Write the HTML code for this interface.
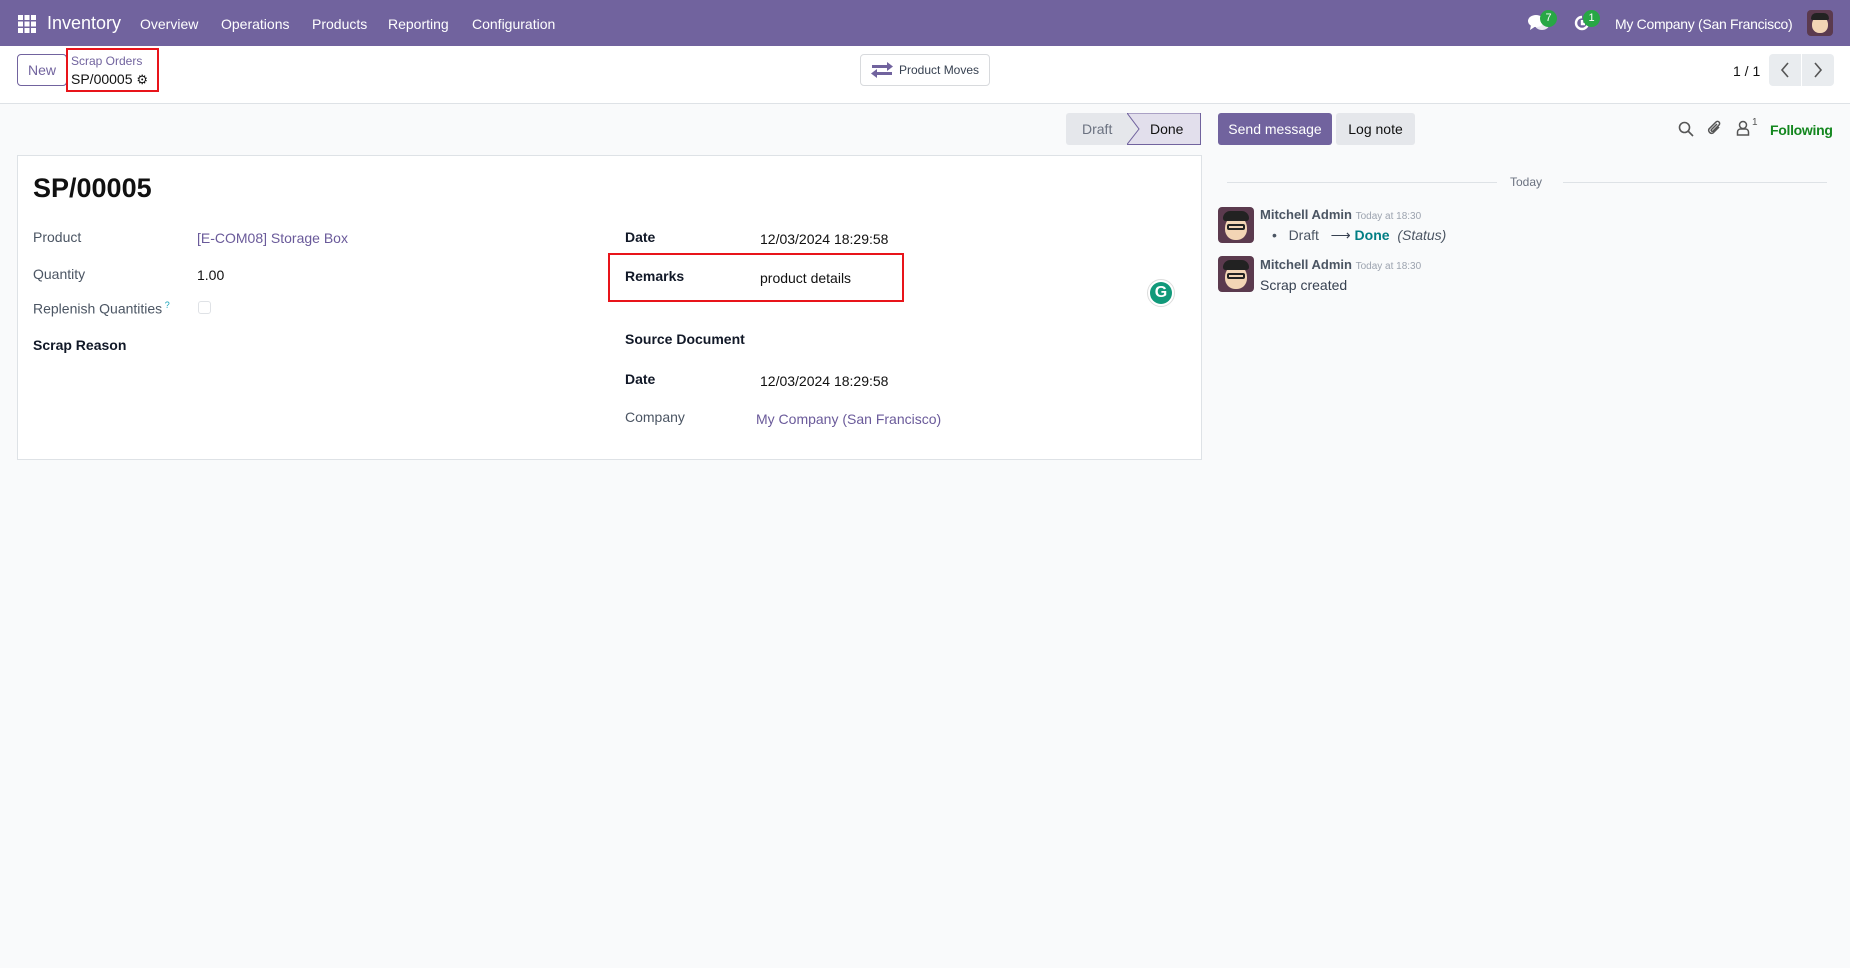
<!DOCTYPE html>
<html><head><meta charset="utf-8">
<style>
*{box-sizing:border-box;margin:0;padding:0}
body{width:1850px;height:968px;overflow:hidden;background:#f9fafb;font-family:"Liberation Sans",sans-serif;color:#374151;font-size:14px;position:relative;white-space:nowrap}
.a{position:absolute;white-space:nowrap}
.nav{position:absolute;left:0;top:0;width:1850px;height:46px;background:#71639e;color:#fff}
.cp{position:absolute;left:0;top:46px;width:1850px;height:58px;background:#fff;border-bottom:1px solid #dee2e6}
.btn{position:absolute;border:1px solid #d8dadd;border-radius:4px;background:#fff;white-space:nowrap}
.lbl{color:#4b5563}
.b{font-weight:bold;color:#111827}
.link{color:#6a5a9a}
</style></head><body>
<div class="nav">
 <svg class="a" style="left:18px;top:15px" width="18" height="18" viewBox="0 0 18 18" fill="#fff">
  <rect x="0" y="0" width="5" height="5"/><rect x="6.5" y="0" width="5" height="5"/><rect x="13" y="0" width="5" height="5"/>
  <rect x="0" y="6.5" width="5" height="5"/><rect x="6.5" y="6.5" width="5" height="5"/><rect x="13" y="6.5" width="5" height="5"/>
  <rect x="0" y="13" width="5" height="5"/><rect x="6.5" y="13" width="5" height="5"/><rect x="13" y="13" width="5" height="5"/>
 </svg>
 <div class="a" style="left:47px;top:13px;font-size:18px">Inventory</div>
 <div class="a" style="left:140px;top:16px;font-size:14px">Overview</div>
 <div class="a" style="left:221px;top:16px;font-size:14px">Operations</div>
 <div class="a" style="left:312px;top:16px;font-size:14px">Products</div>
 <div class="a" style="left:388px;top:16px;font-size:14px">Reporting</div>
 <div class="a" style="left:472px;top:16px;font-size:14px">Configuration</div>
 <svg class="a" style="left:1528px;top:14px" width="22" height="18" viewBox="0 0 22 18" fill="#fff"><ellipse cx="8" cy="7" rx="8" ry="6"/><path d="M3 11 L2 16 L8 12Z"/><ellipse cx="14" cy="11" rx="7" ry="5" opacity=".85"/></svg>
 <div class="a" style="left:1540px;top:10px;width:17px;height:17px;border-radius:50%;background:#28a745;font-size:11px;text-align:center;line-height:17px">7</div>
 <svg class="a" style="left:1573px;top:14px" width="18" height="18" viewBox="0 0 18 18" fill="none" stroke="#fff" stroke-width="2.4"><path d="M15 9A6 6 0 1 1 9 3"/><path d="M9 6v4h3"/></svg>
 <div class="a" style="left:1583px;top:10px;width:17px;height:17px;border-radius:50%;background:#28a745;font-size:11px;text-align:center;line-height:17px">1</div>
 <div class="a" style="left:1615px;top:16px;font-size:14px;letter-spacing:-0.3px">My Company (San Francisco)</div>
 <div class="a" style="left:1807px;top:10px;width:26px;height:26px;border-radius:4px;background:#5b3a4e;overflow:hidden"><div style="position:absolute;left:5px;top:6px;width:16px;height:17px;border-radius:50% 50% 45% 45%;background:#f3d5b5"></div><div style="position:absolute;left:4px;top:3px;width:18px;height:7px;border-radius:6px 6px 2px 2px;background:#222"></div></div>
</div>
<div class="cp">
 <div class="btn" style="left:17px;top:8px;width:50px;height:32px;border-color:#71639e;color:#71639e;font-size:14px;text-align:center;line-height:30px">New</div>
 <div class="a" style="left:66px;top:2px;width:93px;height:44px;border:2px solid #e8141a"></div>
 <div class="a" style="left:71px;top:8px;font-size:12px;color:#71639e">Scrap Orders</div>
 <div class="a" style="left:71px;top:25px;font-size:14px;color:#111">SP/00005 <span style="font-size:13px">⚙</span></div>
 <div class="btn" style="left:860px;top:8px;width:130px;height:32px;font-size:12px;line-height:30px;padding-left:38px;color:#374151">Product Moves</div>
 <svg class="a" style="left:871px;top:16px" width="22" height="16" viewBox="0 0 22 16" fill="#71639e"><rect x="1" y="3" width="17" height="3"/><path d="M16 0 L22 4.5 L16 9Z"/><rect x="4" y="10" width="17" height="3"/><path d="M6 7 L0 11.5 L6 16Z"/></svg>
 <div class="a" style="left:1733px;top:17px;font-size:14px;color:#111">1 / 1</div>
 <div class="a" style="left:1769px;top:8px;width:32px;height:32px;background:#e9ecef;border-radius:4px 0 0 4px"></div>
 <div class="a" style="left:1802px;top:8px;width:32px;height:32px;background:#e9ecef;border-radius:0 4px 4px 0"></div>
 <svg class="a" style="left:1779px;top:16px" width="12" height="16" viewBox="0 0 12 16" fill="none" stroke="#555" stroke-width="1.6"><path d="M9 1 L3 8 L9 15"/></svg>
 <svg class="a" style="left:1812px;top:16px" width="12" height="16" viewBox="0 0 12 16" fill="none" stroke="#555" stroke-width="1.6"><path d="M3 1 L9 8 L3 15"/></svg>
</div>
<div class="a" style="left:1066px;top:113px;width:135px;height:32px;background:#e5e7eb;border-radius:3px"></div>
<svg class="a" style="left:1127px;top:113px" width="75" height="32" viewBox="0 0 75 32"><path d="M0 0 H73.5 V31.5 H0 L12 16Z" fill="#e2dfec" stroke="#71639e" stroke-width="1"/></svg>
<div class="a" style="left:1082px;top:121px;font-size:14px;color:#6b7280">Draft</div>
<div class="a" style="left:1150px;top:121px;font-size:14px;color:#111">Done</div>
<div class="a" style="left:17px;top:155px;width:1185px;height:305px;background:#fff;border:1px solid #dee2e6"></div>
<div class="a" style="left:33px;top:173px;font-size:27px;font-weight:bold;color:#111">SP/00005</div>
<div class="a lbl" style="left:33px;top:229px">Product</div>
<div class="a link" style="left:197px;top:230px">[E-COM08] Storage Box</div>
<div class="a lbl" style="left:33px;top:266px">Quantity</div>
<div class="a" style="left:197px;top:267px;color:#111">1.00</div>
<div class="a lbl" style="left:33px;top:300px">Replenish Quantities<sup style="color:#17a2b8;font-size:9px"> ?</sup></div>
<div class="a" style="left:198px;top:301px;width:13px;height:13px;border:1px solid #dfe2e6;border-radius:3px"></div>
<div class="a b" style="left:33px;top:337px">Scrap Reason</div>
<div class="a b" style="left:625px;top:229px">Date</div>
<div class="a" style="left:760px;top:231px;color:#111">12/03/2024 18:29:58</div>
<div class="a" style="left:608px;top:253px;width:296px;height:49px;border:2px solid #e8141a"></div>
<div class="a b" style="left:625px;top:268px">Remarks</div>
<div class="a" style="left:760px;top:270px;color:#111">product details</div>
<div class="a b" style="left:625px;top:331px">Source Document</div>
<div class="a b" style="left:625px;top:371px">Date</div>
<div class="a" style="left:760px;top:373px;color:#111">12/03/2024 18:29:58</div>
<div class="a lbl" style="left:625px;top:409px">Company</div>
<div class="a link" style="left:756px;top:411px">My Company (San Francisco)</div>
<div class="a" style="left:1147px;top:279px;width:28px;height:28px;border-radius:50%;background:#fff;border:1px solid #ddd"></div>
<div class="a" style="left:1150px;top:282px;width:22px;height:22px;border-radius:50%;background:#11997a;color:#fff;font-weight:bold;font-size:16px;text-align:center;line-height:22px">G</div>
<div class="a" style="left:1218px;top:113px;width:114px;height:32px;background:#71639e;border-radius:3px;color:#fff;font-size:14px;text-align:center;line-height:32px">Send message</div>
<div class="a" style="left:1336px;top:113px;width:79px;height:32px;background:#e5e7eb;border-radius:3px;color:#111;font-size:14px;text-align:center;line-height:32px">Log note</div>
<svg class="a" style="left:1678px;top:121px" width="16" height="16" viewBox="0 0 16 16" fill="none" stroke="#555" stroke-width="1.6"><circle cx="6.5" cy="6.5" r="5"/><path d="M10 10 L15 15"/></svg>
<svg class="a" style="left:1707px;top:119px" width="16" height="18" viewBox="0 0 16 18" fill="none" stroke="#555" stroke-width="1.5"><path d="M12 8 L6 14 A3 3 0 0 1 2 10 L9 3 A2 2 0 0 1 12 6 L6 12 A1 1 0 0 1 4.5 10.5 L10 5"/></svg>
<svg class="a" style="left:1736px;top:120px" width="14" height="16" viewBox="0 0 14 16" fill="none" stroke="#555" stroke-width="1.5"><circle cx="7" cy="5" r="3.5"/><path d="M1.5 15 V12 A3 3 0 0 1 4.5 9 H9.5 A3 3 0 0 1 12.5 12 V15Z"/></svg>
<div class="a" style="left:1752px;top:117px;font-size:10px;color:#555">1</div>
<div class="a" style="left:1770px;top:122px;font-size:14px;font-weight:bold;color:#14871f;letter-spacing:-0.3px">Following</div>
<div class="a" style="left:1227px;top:182px;width:270px;height:1px;background:#dee2e6"></div>
<div class="a" style="left:1563px;top:182px;width:264px;height:1px;background:#dee2e6"></div>
<div class="a" style="left:1510px;top:175px;font-size:12px;color:#6b7280">Today</div>
<div class="a" style="left:1218px;top:207px;width:36px;height:36px;border-radius:4px;background:#5b3a4e;overflow:hidden"><div style="position:absolute;left:7px;top:9px;width:22px;height:24px;border-radius:50% 50% 45% 45%;background:#f3d5b5"></div><div style="position:absolute;left:5px;top:4px;width:26px;height:10px;border-radius:8px 8px 3px 3px;background:#222"></div><div style="position:absolute;left:9px;top:17px;width:18px;height:6px;border:2px solid #222;border-radius:2px"></div></div>
<div class="a" style="left:1260px;top:207px;font-size:13px;font-weight:bold;color:#4b5563">Mitchell Admin <span style="font-weight:normal;font-size:10px;color:#9ca3af">Today at 18:30</span></div>
<div class="a" style="left:1272px;top:227px;font-size:14px;color:#4b5563">•&nbsp;&nbsp; Draft &nbsp; <span style="color:#374151">⟶</span> <span style="color:#017e84;font-weight:bold">Done</span> &nbsp;<i>(Status)</i></div>
<div class="a" style="left:1218px;top:256px;width:36px;height:36px;border-radius:4px;background:#5b3a4e;overflow:hidden"><div style="position:absolute;left:7px;top:9px;width:22px;height:24px;border-radius:50% 50% 45% 45%;background:#f3d5b5"></div><div style="position:absolute;left:5px;top:4px;width:26px;height:10px;border-radius:8px 8px 3px 3px;background:#222"></div><div style="position:absolute;left:9px;top:17px;width:18px;height:6px;border:2px solid #222;border-radius:2px"></div></div>
<div class="a" style="left:1260px;top:257px;font-size:13px;font-weight:bold;color:#4b5563">Mitchell Admin <span style="font-weight:normal;font-size:10px;color:#9ca3af">Today at 18:30</span></div>
<div class="a" style="left:1260px;top:277px;font-size:14px;color:#374151">Scrap created</div>
</body></html>
